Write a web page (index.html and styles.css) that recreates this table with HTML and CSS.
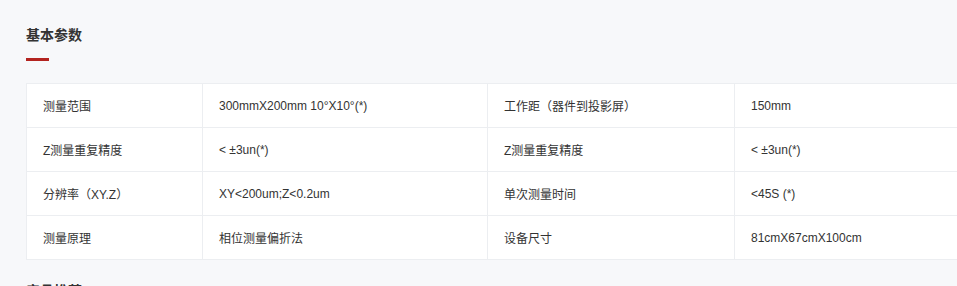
FILE: index.html
```html
<!DOCTYPE html>
<html lang="zh-CN">
<head>
<meta charset="utf-8">
<title>基本参数</title>
<link rel="stylesheet" href="styles.css">
</head>
<body>
<div class="page">
  <section class="section">
    <h2 class="title">基本参数</h2>
    <div class="bar"></div>
    <table class="params">
      <colgroup>
        <col class="c1"><col class="c2"><col class="c3"><col class="c4">
      </colgroup>
      <tr><td>测量范围</td><td>300mmX200mm 10°X10°(*)</td><td>工作距（器件到投影屏）</td><td>150mm</td></tr>
      <tr><td>Z测量重复精度</td><td>&lt; ±3un(*)</td><td>Z测量重复精度</td><td>&lt; ±3un(*)</td></tr>
      <tr><td>分辨率（XY.Z）</td><td>XY&lt;200um;Z&lt;0.2um</td><td>单次测量时间</td><td>&lt;45S (*)</td></tr>
      <tr><td>测量原理</td><td>相位测量偏折法</td><td>设备尺寸</td><td>81cmX67cmX100cm</td></tr>
    </table>
  </section>
  <section class="section next">
    <h2 class="title">产品推荐</h2>
  </section>
</div>
</body>
</html>
```
FILE: styles.css
```css
html, body {
  margin: 0;
  padding: 0;
  overflow: hidden;
  background: #f7f8fa;
}
body {
  font-family: "Liberation Sans", "Noto Sans CJK SC", sans-serif;
  color: #333;
}
.page {
  padding: 25px 0 0 26px;
}
.title {
  margin: 0;
  font-size: 14px;
  line-height: 20px;
  font-weight: bold;
  color: #333;
}
.bar {
  width: 23px;
  height: 3px;
  background: #b3231f;
  margin-top: 13px;
}
.params {
  margin-top: 22px;
  border-collapse: collapse;
  background: #fff;
  width: 1010px;
  table-layout: fixed;
  font-size: 12px;
}
.params td {
  border: 1px solid #eceef1;
  height: 44px;
  padding: 0 16px;
  box-sizing: border-box;
  white-space: nowrap;
  vertical-align: middle;
  color: #333;
}
.c1 { width: 176px; }
.c2 { width: 285px; }
.c3 { width: 247px; }
.c4 { width: 302px; }
.next {
  margin-top: 21px;
}
```
